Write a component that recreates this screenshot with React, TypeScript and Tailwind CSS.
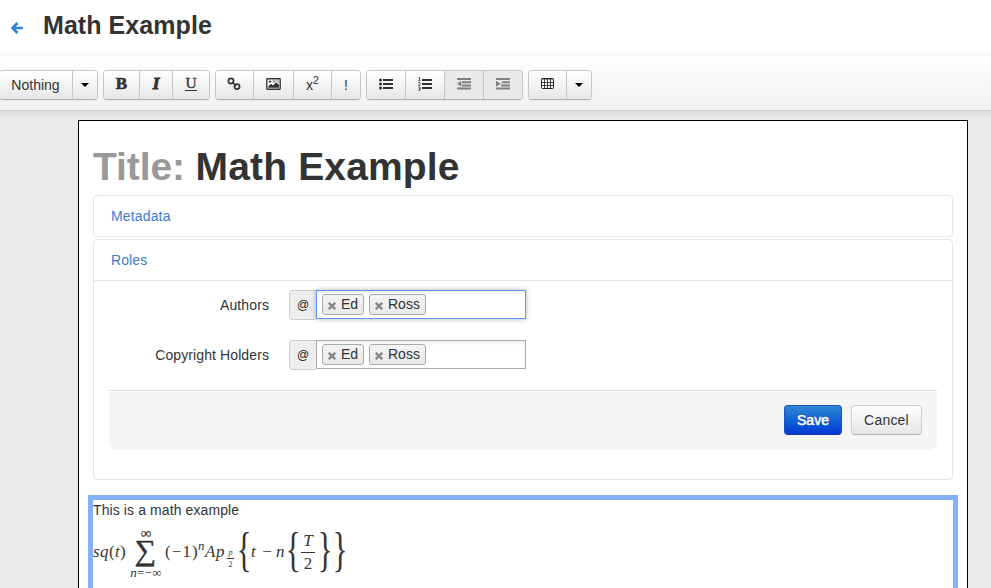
import React from 'react';

const serif = 'font-["Liberation_Serif",serif]';

function Group({ className = '', children }: { className?: string; children: React.ReactNode }) {
  return (
    <div className={`flex h-[30px] shrink-0 divide-x divide-[#c4c4c4] overflow-hidden rounded-[4px] border border-[#c8c8c8] border-b-[#b3b3b3] shadow-[0_1px_2px_rgba(0,0,0,0.05)] ${className}`}>
      {children}
    </div>
  );
}

function Btn({ className, disabled = false, label, children }: { className: string; disabled?: boolean; label?: string; children: React.ReactNode }) {
  const tone = disabled ? 'bg-[#e9e9e9]' : 'bg-linear-to-b from-white to-[#e6e6e6]';
  return (
    <button aria-label={label} disabled={disabled} className={`flex shrink-0 items-center justify-center text-[14px] leading-5 text-[#333] ${tone} ${className}`}>
      {children}
    </button>
  );
}

function Caret() {
  return <span className="h-0 w-0 border-x-4 border-t-4 border-x-transparent border-t-black" />;
}

function BulletIcon() {
  return (
    <svg width="14" height="12" viewBox="0 0 14 12" fill="#333" className="-mt-0.5">
      <path d="M4 1h10v2H4zM4 5h10v2H4zM4 9h10v2H4z" />
      <circle cx="1.5" cy="2" r="1.5" /><circle cx="1.5" cy="6" r="1.5" /><circle cx="1.5" cy="10" r="1.5" />
    </svg>
  );
}

function NumberIcon() {
  return (
    <svg width="14" height="14" viewBox="0 0 14 14" fill="#333" className="-mt-0.5">
      <path d="M4 2h10v2H4zM4 6h10v2H4zM4 10h10v2H4z" />
      <path d="M.5 1l1-.5v3M.3 3.5h2.2M.3 5.5h1.8v1L.4 8.3h2M.3 10h1.8v1.6H.8M2.1 11.5v1.7H.2" fill="none" stroke="#333" strokeWidth=".8" />
    </svg>
  );
}

function OutdentIcon() {
  return (
    <svg width="14" height="12" viewBox="0 0 14 12" fill="#808080" className="-mt-0.5">
      <path d="M0 0h14v2H0zM5 3.2h9v2H5zM5 6.4h9v2H5zM0 9.6h14v2H0z" />
      <path d="M4.3 2.8v6L0 5.8z" />
    </svg>
  );
}

function IndentIcon() {
  return (
    <svg width="14" height="12" viewBox="0 0 14 12" fill="#808080" className="-mt-0.5">
      <path d="M0 0h14v2H0zM6 3.2h8v2H6zM5 6.4h9v2H5zM0 9.6h14v2H0z" />
      <path d="M0 2.8v6l4.8-3z" />
    </svg>
  );
}

function LinkIcon() {
  return (
    <svg width="14" height="14" viewBox="0 0 14 14" fill="none" stroke="#333" strokeWidth="1.7" className="-mt-[3px] -ml-px">
      <circle cx="4" cy="4" r="2.6" /><circle cx="10" cy="9.6" r="2.6" /><path d="M5 5l4.3 4" />
    </svg>
  );
}

function PictureIcon() {
  return (
    <svg width="15" height="12" viewBox="0 0 15 12" className="-mt-0.5">
      <rect x=".8" y=".8" width="13.4" height="10.4" rx=".7" fill="#fff" stroke="#333" strokeWidth="1.4" />
      <path d="M2.3 9.8V8.2L5 5.8l2 1.6 3.4-3.2L13 7v2.8z" fill="#333" />
      <circle cx="4" cy="3.6" r="1.2" fill="#333" />
      <path d="M6 2.2h7v3L10.5 3 8 5.5z" fill="#aaa" />
    </svg>
  );
}

function TableIcon() {
  return (
    <svg width="13" height="11" viewBox="0 0 13 11" fill="none" stroke="#222" className="-mt-[3px]">
      <rect x=".5" y=".5" width="12" height="10" rx="1" />
      <path d="M.5 1h12M.5 4.5h12M.5 7.5h12M3.5 1v10M6.5 1v10M9.5 1v10" strokeWidth=".8" />
    </svg>
  );
}

function Toolbar() {
  return (
    <div className="relative z-10 flex h-[56px] shrink-0 gap-[5px] border-t border-b border-t-[#f7f7f7] border-b-[#d0d0d0] bg-linear-to-b from-white to-[#f1f1f1] pt-[14px] shadow-[0_1px_7px_rgba(0,0,0,0.11)]">
      <Group className="-ml-px">
        <Btn className="w-[73px] pr-px">Nothing</Btn>
        <Btn className="w-[24px]" label="Styles"><Caret /></Btn>
      </Group>
      <Group>
        <Btn className="w-[36px]"><b className={`${serif} -mt-[3px] text-[17px] [-webkit-text-stroke:0.6px_#333]`}>B</b></Btn>
        <Btn className="w-[33px]"><b className={`${serif} -mt-[3px] text-[17px] italic [-webkit-text-stroke:0.9px_#333]`}>I</b></Btn>
        <Btn className="w-[36px]"><span className={`${serif} -mt-[5px] h-[17px] w-[12px] border-b border-[#333] text-center text-[15.5px] leading-[17px] [-webkit-text-stroke:0.3px_#333]`}>U</span></Btn>
      </Group>
      <Group>
        <Btn className="w-[38px]" label="Link"><LinkIcon /></Btn>
        <Btn className="w-[40px]" label="Image"><PictureIcon /></Btn>
        <Btn className="w-[38px]"><span>x<sup className="relative -top-[6px] align-baseline text-[10.5px] leading-none">2</sup></span></Btn>
        <Btn className="w-[28px]">!</Btn>
      </Group>
      <Group>
        <Btn className="w-[39px]" label="Bulleted list"><BulletIcon /></Btn>
        <Btn className="w-[39px]" label="Numbered list"><NumberIcon /></Btn>
        <Btn className="w-[39px]" disabled label="Outdent"><OutdentIcon /></Btn>
        <Btn className="w-[38px]" disabled label="Indent"><IndentIcon /></Btn>
      </Group>
      <Group>
        <Btn className="w-[38px]" label="Table"><TableIcon /></Btn>
        <Btn className="w-[24px]" label="Table options"><Caret /></Btn>
      </Group>
    </div>
  );
}

function Tag({ name, className }: { name: string; className: string }) {
  return (
    <span className={`flex h-[21px] items-center rounded-[3px] border border-[#aaa] bg-linear-to-b from-[#f4f4f4] to-[#e9e9e9] pl-[5px] text-[14px] leading-[19px] text-[#333] ${className}`}>
      <svg width="8" height="8" viewBox="0 0 8 8" className="mt-[3px] mr-[5px] shrink-0" stroke="#888" strokeWidth="2.4"><path d="M.8.8l6.4 6.4M7.2.8L.8 7.2" /></svg>
      {name}
    </span>
  );
}

function Row({ label, active = false }: { label: string; active?: boolean }) {
  return (
    <div className="flex h-[30px]">
      <label className="w-[160px] pt-[5px] text-right leading-5 tracking-[0.1px] text-[#333]">{label}</label>
      <span className="ml-5 flex w-[27px] items-center justify-center rounded-l-[4px] border border-r-0 border-[#ccc] bg-[#eee] text-[12px] text-[#222]">@</span>
      <div className={`flex h-[29px] w-[210px] gap-[5px] border bg-linear-to-b from-[#eee] to-white to-15% pt-[3px] pl-[5px] ${active ? 'border-[#5897fb] shadow-[0_0_5px_rgba(0,0,0,0.3)]' : 'border-[#aaa]'}`}>
        <Tag name="Ed" className="w-[42px]" />
        <Tag name="Ross" className="w-[57px]" />
      </div>
    </div>
  );
}

function Brace({ children, className }: { children: string; className: string }) {
  return (
    <span className={`flex h-[44px] shrink-0 items-center justify-center not-italic ${className}`}>
      <span className="block scale-x-[1.8] scale-y-[2.85] text-[17px] leading-[20px]">{children}</span>
    </span>
  );
}

function Formula() {
  return (
    <div className={`${serif} flex h-[60px] items-start text-[17px] leading-5 whitespace-nowrap text-[#333]`}>
      <span className="mt-[22px] w-[36px] tracking-[0.4px]"><i>sq</i>(<i>t</i>)</span>
      <span className="flex w-[34px] flex-col items-center">
        <span className="mt-[8px] h-[10px] text-[15px] leading-[10px] [-webkit-text-stroke:0.2px_#333]">∞</span>
        <span className="h-[27px] scale-x-[1.12] scale-y-[1.08] text-[27px] leading-[25px] [-webkit-text-stroke:0.4px_#333]">∑</span>
        <span className="mt-[2px] h-[12px] text-[13px] leading-[12px] tracking-[0.3px]"><i>n</i>=−∞</span>
      </span>
      <span className="mt-[22px] ml-[2px] w-[33px] tracking-[1.1px]">(−1)</span>
      <i className="mt-[16px] w-[7px] text-[13px]">n</i>
      <i className="mt-[22px] w-[21px] tracking-[0.5px]">Ap</i>
      <span className="mt-[28px] ml-px flex w-[7px] flex-col items-center text-[8px] leading-[9px]">
        <i className="h-[11px] w-full border-b border-[#333] text-center">p</i>
        <span className="mt-px">2</span>
      </span>
      <Brace className="mt-[10px] ml-[3px] w-[14px]">{'{'}</Brace>
      <i className="mt-[22px] w-[8px]">t</i>
      <span className="mt-[22px] w-[17px] pr-px text-center">−</span>
      <i className="mt-[22px] w-[9px]">n</i>
      <Brace className="mt-[10px] ml-px w-[14px]">{'{'}</Brace>
      <span className="mt-[12px] ml-px flex w-[14px] flex-col items-center">
        <i className="h-[21px] w-full border-b border-[#333] text-center leading-[18px]">T</i>
        <span className="mt-px">2</span>
      </span>
      <Brace className="mt-[10px] ml-[3px] w-[15px]">{'}'}</Brace>
      <Brace className="mt-[10px] w-[15px]">{'}'}</Brace>
    </div>
  );
}

export default function App() {
  return (
    <div className="flex h-[588px] w-[991px] flex-col overflow-hidden bg-[#eaeaea] font-['Liberation_Sans',Arial,sans-serif] text-[14px] leading-5 text-[#333]">
      <header className="flex h-[55px] shrink-0 items-start bg-white pt-[5px] pl-[11px]">
        <svg width="12" height="12" viewBox="0 0 12 12" fill="none" stroke="#2f86d3" strokeWidth="2.7" className="mt-[17px]"><path d="M12 6H2M6.4 1L1.7 6l4.7 5" /></svg>
        <h1 className="ml-5 text-[25px] leading-10 font-bold tracking-[0.07px]">Math Example</h1>
      </header>
      <Toolbar />
      <main className="mt-[9px] ml-[78px] h-[600px] w-[890px] shrink-0 border border-black bg-white px-[9px]">
        <div className="px-[5px]">
          <h2 className="pt-[26px] text-[39px] leading-10 font-bold tracking-[-0.1px]"><span className="text-[#999]">Title:</span> <span className="tracking-[0.15px]">Math Example</span></h2>
          <section className="mt-[8px] h-[42px] rounded-[4px] border border-[#e5e5e5] px-[17px] pt-[10px] tracking-[0.15px] text-[#3b7bcf]">Metadata</section>
          <section className="mt-[2px] h-[241px] rounded-[4px] border border-[#e5e5e5]">
            <div className="h-[41px] border-b border-[#e5e5e5] px-[17px] pt-[10px] tracking-[0.1px] text-[#3b7bcf]">Roles</div>
            <div className="px-[15px] pt-[9px]">
              <div className="flex flex-col gap-5">
                <Row label="Authors" active />
                <Row label="Copyright Holders" />
              </div>
              <div className="mt-5 flex h-[60px] justify-end gap-[9px] rounded-b-[8px] border-t border-[#ddd] bg-[#f5f5f5] pt-[14px] pr-[15px] shadow-[inset_0_1px_0_#fff]">
                <button className="h-[30px] w-[58px] rounded-[4px] border border-[#1a55bf] border-b-[#123aa5] bg-linear-to-b from-[#2f86d3] to-[#0c35d3] leading-5 text-white [-webkit-text-stroke:0.5px_white] [text-shadow:0_-1px_0_rgba(0,0,0,0.25)]">Save</button>
                <button className="h-[30px] w-[71px] rounded-[4px] border border-[#ccc] border-b-[#b3b3b3] bg-linear-to-b from-white to-[#e6e6e6] leading-5 tracking-[0.2px] text-[#333]">Cancel</button>
              </div>
            </div>
          </section>
        </div>
        <article className="mt-[15px] h-[140px] border-[5px] border-[#86b0f9]">
          <p className="h-[20px] tracking-[0.1px]">This is a math example</p>
          <Formula />
        </article>
      </main>
    </div>
  );
}
